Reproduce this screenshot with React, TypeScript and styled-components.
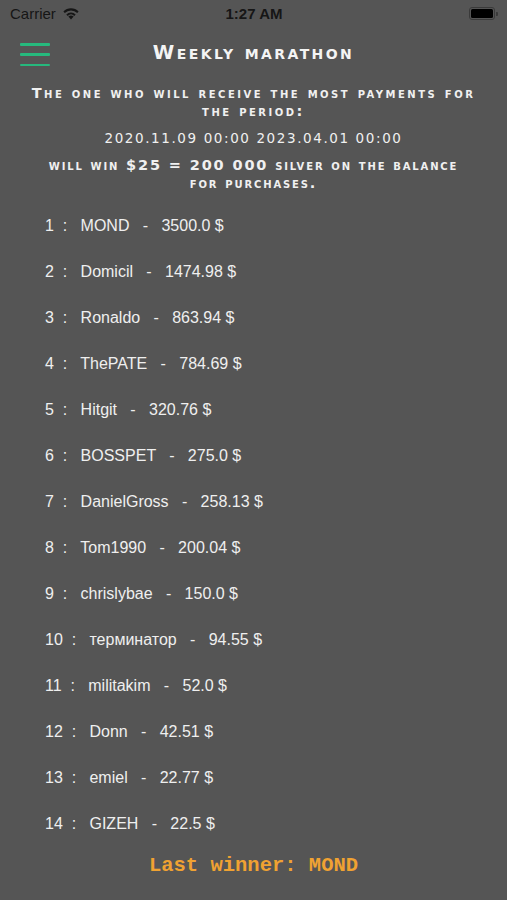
import { createGlobalStyle, styled } from "styled-components";

const GlobalStyle = createGlobalStyle`
    html, body {
        margin: 0;
        padding: 0;
        background: #555555;
    }
    body {
        font-family: "Liberation Sans", Arial, sans-serif;
        color: #eeeeee;
    }
`;

const Screen = styled.div`
    width: 507px;
    height: 900px;
    background: #555555;
    display: flex;
    flex-direction: column;
    overflow: hidden;
`;

const StatusBar = styled.div`
    height: 27px;
    display: grid;
    grid-template-columns: 1fr auto 1fr;
    align-items: center;
    padding: 0 9px 0 10px;
    color: #161616;
    font-family: "Liberation Sans", Arial, sans-serif;
    font-size: 15px;
`;

const Carrier = styled.div`
    display: flex;
    align-items: center;
    gap: 6px;
`;

const Clock = styled.div`
    font-weight: 700;
    font-size: 15px;
`;

const Battery = styled.div`
    justify-self: end;
    display: flex;
    align-items: center;
    gap: 1px;
`;

const BatteryBody = styled.div`
    width: 22px;
    height: 9px;
    border: 1.5px solid #3a3a3a;
    border-radius: 3px;
    padding: 1px;
    display: flex;
`;

const BatteryFill = styled.div`
    flex: 1;
    background: #000;
    border-radius: 1.5px;
`;

const BatteryNub = styled.div`
    width: 2px;
    height: 4px;
    background: #3a3a3a;
    border-radius: 0 1px 1px 0;
`;

const Header = styled.header`
    position: relative;
    height: 50px;
    display: flex;
    align-items: center;
    justify-content: center;
`;

const MenuButton = styled.button`
    position: absolute;
    left: 20px;
    top: 16px;
    width: 30px;
    height: 23px;
    padding: 0;
    border: none;
    background: transparent;
    display: flex;
    flex-direction: column;
    justify-content: space-between;
    cursor: pointer;
`;

const MenuLine = styled.span`
    display: block;
    height: 2.5px;
    background: #26b97d;
    border-radius: 1px;
`;

const Title = styled.h1`
    margin: 0;
    font-family: "DejaVu Sans", sans-serif;
    font-weight: 700;
    font-variant: small-caps;
    font-size: 19.5px;
    letter-spacing: 2.4px;
    color: #f4f4f4;
`;

const Info = styled.section`
    display: flex;
    flex-direction: column;
    align-items: center;
    text-align: center;
    padding: 8px 10px 0;
    gap: 8px;
`;

const Caps = styled.p<{ $spacing: number }>`
    margin: 0;
    font-family: "DejaVu Sans", sans-serif;
    font-weight: 700;
    font-variant: small-caps;
    font-size: 14.5px;
    line-height: 17.5px;
    letter-spacing: ${(p) => p.$spacing}px;
    color: #f0f0f0;
`;

const Period = styled.p`
    margin: 1px 0 2px;
    font-family: "DejaVu Sans", sans-serif;
    font-size: 13.5px;
    line-height: 18px;
    letter-spacing: 1.6px;
    color: #f0f0f0;
`;

const Board = styled.ol`
    list-style: none;
    margin: 11px 0 0;
    padding: 0 0 0 45px;
`;

const Row = styled.li`
    height: 46px;
    line-height: 46px;
    font-size: 16px;
    white-space: pre;
    color: #efefef;
`;

const Footer = styled.div`
    margin-top: 7px;
    text-align: center;
    font-family: "Liberation Mono", "Courier New", monospace;
    font-weight: 700;
    font-size: 20.5px;
    line-height: 24px;
    color: #f0a232;
`;

const leaders = [
    { name: "MOND", sum: "3500.0" },
    { name: "Domicil", sum: "1474.98" },
    { name: "Ronaldo", sum: "863.94" },
    { name: "ThePATE", sum: "784.69" },
    { name: "Hitgit", sum: "320.76" },
    { name: "BOSSPET", sum: "275.0" },
    { name: "DanielGross", sum: "258.13" },
    { name: "Tom1990", sum: "200.04" },
    { name: "chrislybae", sum: "150.0" },
    { name: "терминатор", sum: "94.55" },
    { name: "militakim", sum: "52.0" },
    { name: "Donn", sum: "42.51" },
    { name: "emiel", sum: "22.77" },
    { name: "GIZEH", sum: "22.5" },
];

const WifiIcon = () => (
    <svg width="18" height="13" viewBox="0 0 18 13">
        <path d="M9 12.5 L6.4 9.6 A3.8 3.8 0 0 1 11.6 9.6 Z" fill="#161616" />
        <path d="M4.3 7.4 A6.8 6.8 0 0 1 13.7 7.4 L12.3 8.9 A4.8 4.8 0 0 0 5.7 8.9 Z" fill="#161616" />
        <path d="M1.4 4.5 A10.8 10.8 0 0 1 16.6 4.5 L15.2 6 A8.8 8.8 0 0 0 2.8 6 Z" fill="#161616" />
    </svg>
);

const App = () => {
    return (
        <>
            <GlobalStyle />
            <Screen>
                <StatusBar>
                    <Carrier>
                        Carrier
                        <WifiIcon />
                    </Carrier>
                    <Clock>1:27 AM</Clock>
                    <Battery>
                        <BatteryBody>
                            <BatteryFill />
                        </BatteryBody>
                        <BatteryNub />
                    </Battery>
                </StatusBar>
                <Header>
                    <MenuButton aria-label='menu'>
                        <MenuLine />
                        <MenuLine />
                        <MenuLine />
                    </MenuButton>
                    <Title>Weekly marathon</Title>
                </Header>
                <Info>
                    <Caps $spacing={2.5}>
                        The one who will receive the most payments for
                        <br />
                        the period:
                    </Caps>
                    <Period>2020.11.09 00:00 2023.04.01 00:00</Period>
                    <Caps $spacing={1.85}>
                        will win $25 = 200 000 silver on the balance
                        <br />
                        for purchases.
                    </Caps>
                </Info>
                <Board>
                    {leaders.map((item, i) => (
                        <Row key={item.name}>{`${i + 1}  :   ${item.name}   -   ${item.sum} $`}</Row>
                    ))}
                </Board>
                <Footer>Last winner: MOND</Footer>
            </Screen>
        </>
    );
};

export default App;
